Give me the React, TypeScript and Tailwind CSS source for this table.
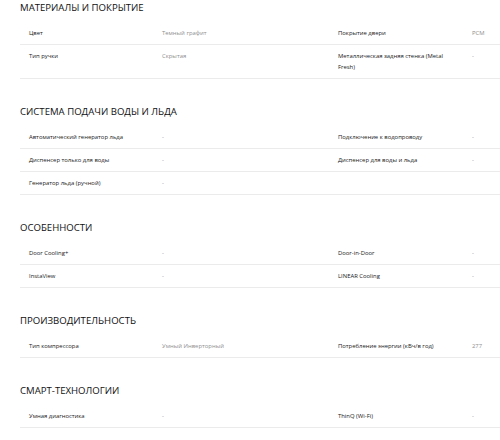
import React from "react";

type Row = [string, string, string?, string?];
type Section = { title: string; rows: Row[] };

const sections: Section[] = [
  {
    title: "МАТЕРИАЛЫ И ПОКРЫТИЕ",
    rows: [
      ["Цвет", "Темный графит", "Покрытие двери", "PCM"],
      ["Тип ручки", "Скрытая", "Металлическая задняя стенка (Metal Fresh)", "-"],
    ],
  },
  {
    title: "СИСТЕМА ПОДАЧИ ВОДЫ И ЛЬДА",
    rows: [
      ["Автоматический генератор льда", "-", "Подключение к водопроводу", "-"],
      ["Диспенсер только для воды", "-", "Диспенсер для воды и льда", "-"],
      ["Генератор льда (ручной)", "-"],
    ],
  },
  {
    title: "ОСОБЕННОСТИ",
    rows: [
      ["Door Cooling+", "-", "Door-in-Door", "-"],
      ["InstaView", "-", "LINEAR Cooling", "-"],
    ],
  },
  {
    title: "ПРОИЗВОДИТЕЛЬНОСТЬ",
    rows: [["Тип компрессора", "Умный Инверторный", "Потребление энергии (кВч/в год)", "277"]],
  },
  {
    title: "СМАРТ-ТЕХНОЛОГИИ",
    rows: [["Умная диагностика", "-", "ThinQ (Wi-Fi)", "-"]],
  },
];

export default function App() {
  return (
    <div
      className="w-[500px] h-[440px] overflow-hidden bg-white pl-[20px]"
      style={{ fontFamily: '"Open Sans", "Noto Sans", sans-serif' }}
    >
      {sections.map((s, i) => (
        <div key={s.title} className={i === 0 ? "" : "mt-[25px]"}>
          <h2 className="text-[9.6px] leading-[16px] font-normal text-[#111] mb-[6px]">{s.title}</h2>
          <div>
            {s.rows.map((r, j) => (
              <div
                key={j}
                className="grid grid-cols-[133px_176px_134px_1fr] border-b border-[#ebebeb] text-[5.9px] leading-[11px]"
              >
                <div className="px-[9px] py-[5.5px] text-[#1a1a1a] font-medium">{r[0]}</div>
                <div className="px-[9px] py-[5.5px] text-[#8f8f8f]">{r[1]}</div>
                <div className="px-[9px] py-[5.5px] text-[#1a1a1a] font-medium">{r[2] ?? ""}</div>
                <div className="px-[9px] py-[5.5px] text-[#8f8f8f]">{r[3] ?? ""}</div>
              </div>
            ))}
          </div>
        </div>
      ))}
    </div>
  );
}
